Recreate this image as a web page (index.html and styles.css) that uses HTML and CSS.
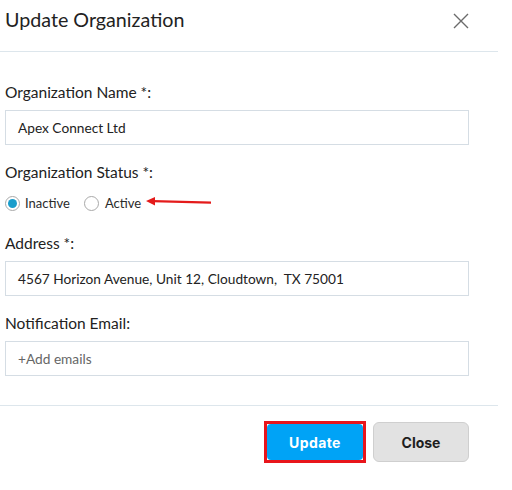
FILE: index.html
```html
<!DOCTYPE html>
<html>
<head>
<meta charset="utf-8">
<link rel="stylesheet" href="styles.css">
</head>
<body>
<div class="modal">
  <div class="header">
    <h1 class="title">Update Organization</h1>
    <svg class="close-x" width="16" height="16" viewBox="0 0 16 16"><path d="M1 1 L15 15 M15 1 L1 15" stroke="#6b6b6b" stroke-width="1.4" fill="none"/></svg>
  </div>
  <div class="body">
    <div class="label first">Organization Name *:</div>
    <div class="field">Apex Connect Ltd</div>

    <div class="label">Organization Status *:</div>
    <div class="radios">
      <span class="radio checked"></span><span class="rtext">Inactive</span>
      <span class="radio second"></span><span class="rtext">Active</span>
      <svg class="arrow" width="70" height="12" viewBox="0 0 70 12"><path d="M8 5.2 L66 6.6" stroke="#e41b1b" stroke-width="2.2" fill="none"/><path d="M1 5 L10 1 L10 9.4 Z" fill="#e41b1b"/></svg>
    </div>

    <div class="label">Address *:</div>
    <div class="field">4567 Horizon Avenue, Unit 12, Cloudtown,&nbsp; TX 75001</div>

    <div class="label">Notification Email:</div>
    <div class="field placeholder">+Add emails</div>
  </div>
  <div class="footer">
    <div class="highlight"><button class="btn update">Update</button></div>
    <button class="btn close">Close</button>
  </div>
</div>
</body>
</html>
```

FILE: styles.css
```css
html, body {
  margin: 0;
  padding: 0;
  background: #ffffff;
}
body {
  font-family: Lato, "Open Sans", sans-serif;
  color: #2b2b2b;
}
.modal {
  width: 498px;
}
.header {
  height: 52px;
  border-bottom: 1px solid #dde6ec;
  display: flex;
  justify-content: space-between;
  align-items: flex-start;
  padding: 0 29px 0 5px;
  box-sizing: border-box;
}
.title {
  margin: 8px 0 0 0;
  font-size: 19.7px;
  line-height: 24px;
  font-weight: 400;
  color: #222;
}
.close-x {
  margin-top: 13px;
}
.body {
  padding: 0 29px 0 5px;
}
.label {
  font-size: 15.5px;
  line-height: 20px;
  margin-top: 17px;
  margin-bottom: 8px;
  color: #222;
}
.label.first {
  margin-top: 30px;
}
.field {
  height: 35px;
  box-sizing: border-box;
  border: 1px solid #d5dde4;
  padding: 0 12px;
  display: flex;
  align-items: center;
  font-size: 13.7px;
  color: #222;
}
.field.placeholder {
  color: #666;
}
.radios {
  position: relative;
  display: flex;
  align-items: center;
  height: 20px;
  margin-top: 11px;
  margin-bottom: 20px;
  font-size: 13px;
}
.radio {
  width: 15px;
  height: 15px;
  box-sizing: border-box;
  border: 1px solid #a9a9a9;
  border-radius: 50%;
  background: #fff;
  display: flex;
  align-items: center;
  justify-content: center;
  margin-right: 5px;
}
.radio.second {
  margin-left: 14px;
  margin-right: 6px;
}
.radio.checked::after {
  content: "";
  width: 9px;
  height: 9px;
  border-radius: 50%;
  background: #1a9dcb;
}
.rtext {
  line-height: 20px;
}
.arrow {
  position: absolute;
  left: 140px;
  top: 3px;
}
.footer {
  margin-top: 29px;
  border-top: 1px solid #dde6ec;
  display: flex;
  justify-content: flex-end;
  align-items: center;
  gap: 7px;
  padding: 15px 29px 0 0;
}
.highlight {
  border: 3px solid #e8151b;
  display: flex;
}
.btn {
  font-family: Inter, "Open Sans", sans-serif;
  font-weight: 700;
  font-size: 14px;
  cursor: pointer;
}
.update {
  width: 96px;
  height: 36px;
  border: none;
  border-radius: 4px;
  background: #00a3f6;
  color: #fff;
  letter-spacing: 0.4px;
}
.close {
  width: 96px;
  height: 40px;
  border: 1px solid #cfcfcf;
  border-radius: 6px;
  background: #e2e2e2;
  color: #1e1e1e;
}
```
